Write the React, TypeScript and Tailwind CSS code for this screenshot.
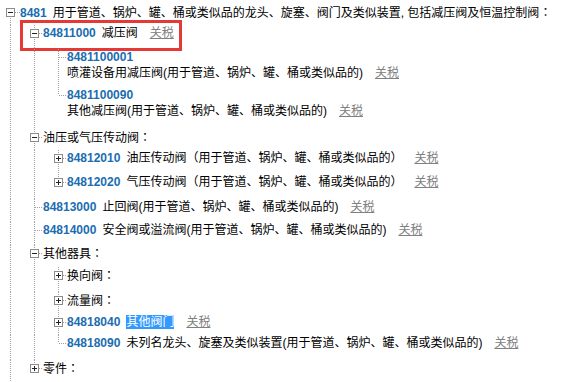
import React from "react";

type TreeRow = {
  level: number;
  h: string;
  box?: "open" | "closed";
  last?: boolean;
  noTop?: boolean;
  code?: string;
  text?: string;
  sub?: string;
  pick?: string;
  tax?: boolean;
  marked?: boolean;
};

const USE = "用于管道、锅炉、罐、桶或类似品的";

const ROWS: TreeRow[] = [
  {
    level: 0,
    h: "h-[21px]",
    box: "open",
    noTop: true,
    code: "8481",
    text: "用于管道、锅炉、罐、桶或类似品的龙头、旋塞、阀门及类似装置, 包括减压阀及恒温控制阀：",
  },
  { level: 1, h: "h-[24px]", box: "open", code: "84811000", text: "减压阀", tax: true, marked: true },
  { level: 2, h: "h-[38px]", code: "8481100001", sub: `喷灌设备用减压阀(${USE})`, tax: true },
  { level: 2, h: "h-[42px]", last: true, code: "8481100090", sub: `其他减压阀(${USE})`, tax: true },
  { level: 1, h: "h-[21px]", box: "open", text: "油压或气压传动阀：" },
  { level: 2, h: "h-[24px]", box: "closed", code: "84812010", text: `油压传动阀（${USE}）`, tax: true },
  { level: 2, h: "h-[25px]", box: "closed", last: true, code: "84812020", text: `气压传动阀（${USE}）`, tax: true },
  { level: 1, h: "h-[23px]", code: "84813000", text: `止回阀(${USE})`, tax: true },
  { level: 1, h: "h-[23px]", code: "84814000", text: `安全阀或溢流阀(${USE})`, tax: true },
  { level: 1, h: "h-[22px]", box: "open", text: "其他器具：" },
  { level: 2, h: "h-[25px]", box: "closed", text: "换向阀：" },
  { level: 2, h: "h-[22px]", box: "closed", text: "流量阀：" },
  { level: 2, h: "h-[21px]", box: "closed", code: "84818040", pick: "其他阀门", tax: true },
  { level: 2, h: "h-[25px]", last: true, code: "84818090", text: `未列名龙头、旋塞及类似装置(${USE})`, tax: true },
  { level: 1, h: "h-[22px]", box: "closed", last: true, text: "零件：" },
];

const LINE = "#a0a0a0";

function Guide() {
  return (
    <svg width={24} height="100%" className="h-full shrink-0">
      <line x1={10.5} y1={0} x2={10.5} y2="100%" stroke={LINE} strokeDasharray="1 1" />
    </svg>
  );
}

function Elbow({ row }: { row: TreeRow }) {
  const w = row.level === 0 ? 20 : 19;
  const cy = 8;
  return (
    <svg width={w} height="100%" className="h-full shrink-0">
      {!row.noTop && (
        <line x1={10.5} y1={0} x2={10.5} y2={cy} stroke={LINE} strokeDasharray="1 1" />
      )}
      {!row.last && (
        <line x1={10.5} y1={cy} x2={10.5} y2="100%" stroke={LINE} strokeDasharray="1 1" />
      )}
      <line
        x1={row.box ? 15 : 11}
        y1={cy + 0.5}
        x2={w}
        y2={cy + 0.5}
        stroke={LINE}
        strokeDasharray="1 1"
      />
      {row.box && (
        <>
          <rect x={6.5} y={cy - 3.5} width={8} height={8} fill="#fff" stroke="#8c8c8c" />
          <line x1={8} y1={cy + 0.5} x2={13} y2={cy + 0.5} stroke="#222" />
          {row.box === "closed" && (
            <line x1={10.5} y1={cy - 2} x2={10.5} y2={cy + 3} stroke="#222" />
          )}
        </>
      )}
    </svg>
  );
}

// trailing full-width colon sits centred in its cell, like the original font
function Label({ text }: { text: string }) {
  if (!text.endsWith("：")) return <>{text}</>;
  return (
    <>
      {text.slice(0, -1)}
      <span className="font-['Noto_Sans_CJK_TC',sans-serif]">：</span>
    </>
  );
}

function Tax() {
  return <span className="ml-3 text-[#808080] underline">关税</span>;
}

export default function App() {
  return (
    <div className="h-[382px] w-full overflow-hidden bg-white pt-[4px] font-['Liberation_Sans','Noto_Sans_CJK_SC',sans-serif] text-[12px] text-black">
      {ROWS.map((row, i) => (
        <div key={i} className={`relative flex ${row.h}`}>
          {Array.from({ length: row.level }).map((_, k) => (
            <Guide key={k} />
          ))}
          <Elbow row={row} />
          <div className="whitespace-nowrap leading-4">
            <div>
              {row.code && <span className="font-bold text-[#1a6db0]">{row.code}</span>}
              {row.text && (
                <span className={row.code ? "ml-[6px]" : ""}>
                  <Label text={row.text} />
                </span>
              )}
              {row.pick && (
                <span className="ml-[6px] inline-block bg-[#3399ff] leading-[14px] text-white">
                  {row.pick}
                </span>
              )}
              {row.tax && !row.sub && <Tax />}
            </div>
            {row.sub && (
              <div>
                {row.sub}
                {row.tax && <Tax />}
              </div>
            )}
          </div>
          {row.marked && (
            <div className="pointer-events-none absolute left-[20px] top-[-5px] h-[31px] w-[162px] border-[3px] border-[#e53935]" />
          )}
        </div>
      ))}
    </div>
  );
}
